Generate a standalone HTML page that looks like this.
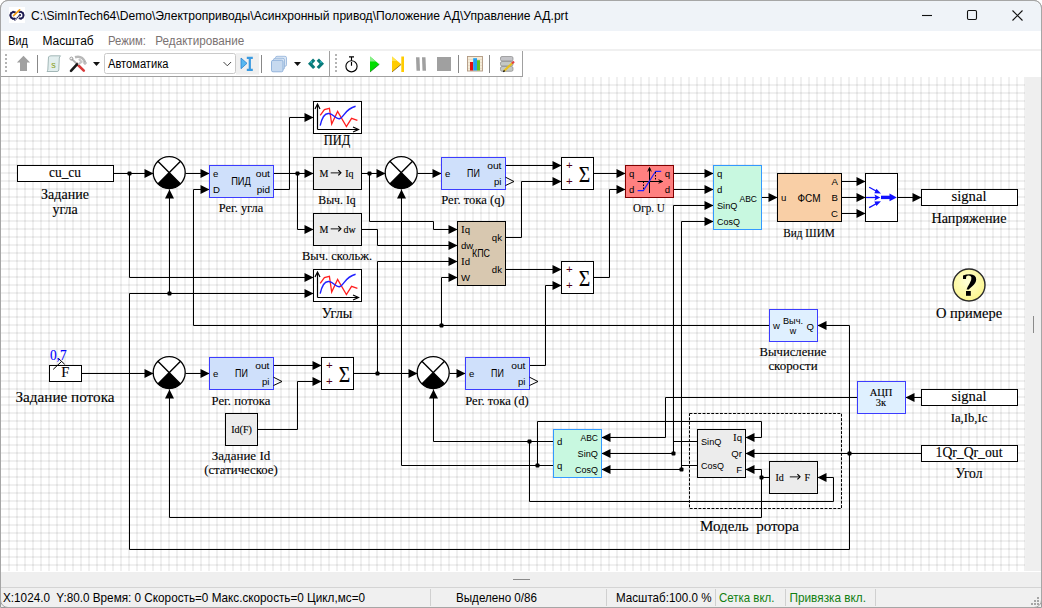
<!DOCTYPE html><html><head><meta charset="utf-8"><style>
*{margin:0;padding:0;box-sizing:border-box}
html,body{width:1042px;height:608px;overflow:hidden;background:#fff}
body{position:relative;font-family:"Liberation Sans",sans-serif}
.abs{position:absolute}
svg text{white-space:pre}
.w{fill:none;stroke:#000;stroke-width:1}
.ar{fill:#000}
.dt{fill:#000}
</style></head><body>

<div class="abs" style="left:0;top:0;width:1042px;height:608px;border:1px solid #9a9a9a;border-radius:8px 8px 0 0;overflow:hidden;background:#fff">
</div>
<!-- title -->
<div class="abs" style="left:1px;top:1px;width:1040px;height:30px;background:#eff3f8;border-radius:7px 7px 0 0"></div>

<!-- title icon -->
<svg class="abs" style="left:9px;top:7px" width="16" height="16" viewBox="0 0 16 16">
<rect width="16" height="16" fill="#fff"/>
<g stroke="#1c1a52" fill="none">
<path d="M6.6,5.6 A3.3,3.3 0 1 0 6.4,11.2" stroke-width="1.9"/>
<path d="M9.6,5.4 A3.3,3.3 0 1 1 9.8,11.2" stroke-width="1.9"/>
<path d="M0.8,8.2 h1.6 M1.6,5.2 l1.2,0.9 M1.6,11.2 l1.2,-0.9 M3.8,3.8 l0.3,1.3 M3.8,12.6 l0.3,-1.3 M15.2,8.2 h-1.6 M14.4,5.2 l-1.2,0.9 M14.4,11.2 l-1.2,-0.9 M12.2,3.8 l-0.3,1.3 M12.2,12.6 l-0.3,-1.3" stroke-width="1.3"/>
<path d="M5.4,13.4 L10.6,8.4" stroke-width="1.5" stroke-dasharray="1.1,0.7"/>
</g>
<circle cx="11" cy="8.1" r="1.1" fill="#1c1a52"/>
<path d="M4.6,8.7 L10.6,2.8" stroke="#f39c12" stroke-width="1.7" stroke-linecap="round"/>
</svg>
<!-- window controls -->
<svg class="abs" style="left:900px;top:0" width="142" height="31" viewBox="900 0 142 31">
<path d="M922,15.5 H932" stroke="#111" stroke-width="1.1"/>
<rect x="967.5" y="10.5" width="9" height="9" rx="1.2" stroke="#111" stroke-width="1.1" fill="none"/>
<path d="M1012.5,10.5 L1022.5,20.5 M1022.5,10.5 L1012.5,20.5" stroke="#111" stroke-width="1.1"/>
</svg>
<!-- toolbar -->
<svg class="abs" style="left:0;top:50px" width="1042" height="26" viewBox="0 50 1042 26">
<g fill="#b4b4b4">
<rect x="5" y="54" width="2" height="2"/><rect x="5" y="58" width="2" height="2"/><rect x="5" y="62" width="2" height="2"/><rect x="5" y="66" width="2" height="2"/><rect x="5" y="70" width="2" height="2"/>
<rect x="335" y="54" width="2" height="2"/><rect x="335" y="58" width="2" height="2"/><rect x="335" y="62" width="2" height="2"/><rect x="335" y="66" width="2" height="2"/><rect x="335" y="70" width="2" height="2"/>
</g>
<polygon points="23.5,55.8 30.1,62.6 27,62.6 27,71 20,71 20,62.6 16.9,62.6" fill="#a0a0a0"/>
<rect x="37" y="55" width="1" height="18" fill="#888"/>
<path d="M48.5,57 Q49,55.8 51,55.8 L60.5,55.8 Q59.5,57 59.3,58 L58.8,70 Q58.6,71.5 57,71.5 L47,71.5 Q47.5,70.5 47.8,70 Z" fill="#e2eeee" stroke="#9ab0b0" stroke-width="0.9"/>
<text x="53.5" y="68" font-family="Liberation Sans" font-size="9" fill="#8aa020" text-anchor="middle">s</text>
<path d="M77,64 L83.8,70.6" stroke="#d83838" stroke-width="2.6" stroke-linecap="round"/>
<path d="M71.6,58.8 L77,64" stroke="#b0b0b0" stroke-width="1.8"/>
<circle cx="71.4" cy="58.6" r="1.5" fill="none" stroke="#999" stroke-width="1"/>
<path d="M77.2,64.2 L71,70.8" stroke="#1a1a1a" stroke-width="2.6" stroke-linecap="round"/>
<path d="M75,57.2 Q82,55.2 85,62" stroke="#b8b8b8" stroke-width="2.6" fill="none"/>
<path d="M79,59 L81.5,61.8 L78.2,64.5" stroke="#c8c8c8" stroke-width="2.2" fill="none"/>
<circle cx="85" cy="63" r="1.2" fill="none" stroke="#999" stroke-width="0.9"/>
<polygon points="93,62 100,62 96.5,66" fill="#111"/>
<rect x="104.5" y="53.5" width="131" height="20" rx="2" fill="#fff" stroke="#c9c9c9"/>
<path d="M223.5,62 L227.3,65.8 L231.1,62" stroke="#444" stroke-width="1" fill="none"/>
<rect x="236" y="53" width="23" height="21.5" fill="#f0f0f0"/>
<polygon points="241,58 247,63.3 241,68.7" fill="#58b8f0" stroke="#2a80d0" stroke-width="0.8"/>
<path d="M246.8,57.8 h6 M249.8,57.8 v12 M246.8,69.8 h6" stroke="#3a9ae0" stroke-width="2.2"/>
<rect x="261" y="55" width="1" height="18" fill="#888"/>
<rect x="275.5" y="56.3" width="11" height="10" rx="1.5" fill="#dbe7f5" stroke="#9ab8dc" stroke-width="0.9"/>
<rect x="273.5" y="58.3" width="11" height="11" rx="1.5" fill="#d5e3f3" stroke="#9ab8dc" stroke-width="0.9"/>
<rect x="271.5" y="60.3" width="11.5" height="11.5" rx="1.5" fill="#c6d9ef" stroke="#8aaed8" stroke-width="0.9"/>
<polygon points="294,62 301,62 297.5,66" fill="#111"/>
<path d="M314.2,59.6 L310.2,63.8 L314.2,68" stroke="#0a7a7a" stroke-width="3.2" fill="none" stroke-linejoin="miter"/>
<path d="M317.8,59.6 L321.8,63.8 L317.8,68" stroke="#0a7a7a" stroke-width="3.2" fill="none" stroke-linejoin="miter"/>
<circle cx="311.2" cy="62" r="0.8" fill="#40e0f0"/><circle cx="321" cy="62" r="0.8" fill="#40e0f0"/>
<rect x="329" y="51" width="1" height="25" fill="#a0a0a0"/>
<circle cx="351.5" cy="66.3" r="5.6" fill="none" stroke="#000" stroke-width="1.15"/>
<path d="M349,56.9 h5 M351.5,56.9 v3.8 M351.5,62 v3.8" stroke="#000" stroke-width="1.15"/>
<polygon points="370,56.5 379.3,64.3 370,72" fill="#00dd00"/><path d="M370,72 L379.3,64.3" stroke="#207020" stroke-width="0.8"/>
<polygon points="370,56.5 376,61.5 370,61.5" fill="#88ee88"/>
<polygon points="392,56.5 401.3,64.3 392,72" fill="#ffcc00"/><path d="M392,72 L401.3,64.3" stroke="#806010" stroke-width="0.8"/>
<polygon points="392,56.5 397,61 392,61" fill="#ffe44d"/>
<rect x="401.3" y="56.5" width="2.7" height="15.5" fill="#ffcc00"/>
<polygon points="416,57.3 419.5,57.3 420,70.7 416.5,70.7" fill="#a0a0a0"/>
<polygon points="422,57.3 425.5,57.3 426,70.7 422.5,70.7" fill="#a0a0a0"/>
<rect x="437" y="57" width="14" height="14" fill="#a0a0a0"/>
<rect x="458" y="55" width="1" height="18" fill="#888"/>
<rect x="467.5" y="56.5" width="15" height="14.5" fill="#f5ecd8" stroke="#b09880" stroke-width="0.9"/>
<path d="M468,59.5h14 M468,62.5h14 M468,65.5h14 M468,68.5h14" stroke="#e0d4c0" stroke-width="0.6"/>
<rect x="470" y="62" width="3.2" height="8.5" fill="#e01010"/>
<rect x="473.2" y="58.2" width="3.8" height="12.3" fill="#20a0f0"/>
<rect x="477" y="60.2" width="3" height="10.3" fill="#60c020"/>
<rect x="489" y="55" width="1" height="18" fill="#888"/>
<rect x="500.5" y="56.5" width="12.5" height="4.5" rx="1.5" fill="#c4c4c8" stroke="#888" stroke-width="0.7"/>
<rect x="500.5" y="61.5" width="12.5" height="4.5" rx="1.5" fill="#c4c8c4" stroke="#888" stroke-width="0.7"/>
<rect x="500.5" y="66.5" width="12.5" height="4.8" rx="1.5" fill="#c4c8c4" stroke="#888" stroke-width="0.7"/>
<path d="M504,71 L512.5,63" stroke="#e8c020" stroke-width="2.2"/>
<path d="M512,63.5 L514,61.5" stroke="#e04040" stroke-width="2.2"/>
<path d="M503.3,71.8 L504.6,70.4" stroke="#111" stroke-width="1.4"/>
<rect x="522" y="51" width="1" height="25" fill="#a0a0a0"/>
</svg>
<!-- menu -->
<div class="abs" style="left:1px;top:49px;width:1040px;height:2px;background:#f0f0f0"></div>
<!-- canvas -->
<svg class="abs" style="left:0;top:0" width="1042" height="608" viewBox="0 0 1042 608">
<rect x="1" y="77" width="1025" height="495" fill="#fff"/>
<path d="M9,77V571M17,77V571M25,77V571M33,77V571M41,77V571M49,77V571M57,77V571M65,77V571M73,77V571M81,77V571M89,77V571M97,77V571M105,77V571M113,77V571M121,77V571M129,77V571M137,77V571M145,77V571M153,77V571M161,77V571M169,77V571M177,77V571M185,77V571M193,77V571M201,77V571M209,77V571M217,77V571M225,77V571M233,77V571M241,77V571M249,77V571M257,77V571M265,77V571M273,77V571M281,77V571M289,77V571M297,77V571M305,77V571M313,77V571M321,77V571M329,77V571M337,77V571M345,77V571M353,77V571M361,77V571M369,77V571M377,77V571M385,77V571M393,77V571M401,77V571M409,77V571M417,77V571M425,77V571M433,77V571M441,77V571M449,77V571M457,77V571M465,77V571M473,77V571M481,77V571M489,77V571M497,77V571M505,77V571M513,77V571M521,77V571M529,77V571M537,77V571M545,77V571M553,77V571M561,77V571M569,77V571M577,77V571M585,77V571M593,77V571M601,77V571M609,77V571M617,77V571M625,77V571M633,77V571M641,77V571M649,77V571M657,77V571M665,77V571M673,77V571M681,77V571M689,77V571M697,77V571M705,77V571M713,77V571M721,77V571M729,77V571M737,77V571M745,77V571M753,77V571M761,77V571M769,77V571M777,77V571M785,77V571M793,77V571M801,77V571M809,77V571M817,77V571M825,77V571M833,77V571M841,77V571M849,77V571M857,77V571M865,77V571M873,77V571M881,77V571M889,77V571M897,77V571M905,77V571M913,77V571M921,77V571M929,77V571M937,77V571M945,77V571M953,77V571M961,77V571M969,77V571M977,77V571M985,77V571M993,77V571M1001,77V571M1009,77V571M1017,77V571M1025,77V571" stroke="rgba(0,0,0,0.06)" stroke-width="2" fill="none" shape-rendering="crispEdges"/><path d="M1,85H1025M1,93H1025M1,101H1025M1,109H1025M1,117H1025M1,125H1025M1,133H1025M1,141H1025M1,149H1025M1,157H1025M1,165H1025M1,173H1025M1,181H1025M1,189H1025M1,197H1025M1,205H1025M1,213H1025M1,221H1025M1,229H1025M1,237H1025M1,245H1025M1,253H1025M1,261H1025M1,269H1025M1,277H1025M1,285H1025M1,293H1025M1,301H1025M1,309H1025M1,317H1025M1,325H1025M1,333H1025M1,341H1025M1,349H1025M1,357H1025M1,365H1025M1,373H1025M1,381H1025M1,389H1025M1,397H1025M1,405H1025M1,413H1025M1,421H1025M1,429H1025M1,437H1025M1,445H1025M1,453H1025M1,461H1025M1,469H1025M1,477H1025M1,485H1025M1,493H1025M1,501H1025M1,509H1025M1,517H1025M1,525H1025M1,533H1025M1,541H1025M1,549H1025M1,557H1025M1,565H1025" stroke="rgba(0,0,0,0.06)" stroke-width="2" fill="none" shape-rendering="crispEdges"/>
<rect x="0" y="76" width="523" height="1" fill="#a0a0a0"/>
<rect x="0" y="76" width="1" height="500" fill="#a0a0a0"/>
<rect x="17.5" y="165.5" width="96" height="16" fill="#fff" stroke="#000" stroke-width="1" /><text x="65" y="177" font-family='"Liberation Serif", serif' font-size="14.5" text-anchor="middle" fill="#000" stroke="#000" stroke-width="0.12" textLength="32" lengthAdjust="spacingAndGlyphs" >cu_cu</text><text x="65" y="199" font-family='"Liberation Serif", serif' font-size="14" text-anchor="middle" fill="#000" stroke="#000" stroke-width="0.12" >Задание</text><text x="65" y="214" font-family='"Liberation Serif", serif' font-size="14" text-anchor="middle" fill="#000" stroke="#000" stroke-width="0.12" >угла</text><path d="M113.5,173.5 L153.5,173.5" class="w"/><polygon points="153.5,173.5 144.5,169.0 144.5,178.0" class="ar"/><rect x="127.5" y="171.5" width="4" height="4" rx="1" class="dt"/><path d="M129.5,173.5 L129.5,277.5 L313.5,277.5" class="w"/><polygon points="313.5,277.5 304.5,273.0 304.5,282.0" class="ar"/><path d="M129.5,549.5 L129.5,293.5 L313.5,293.5" class="w"/><polygon points="313.5,293.5 304.5,289.0 304.5,298.0" class="ar"/><rect x="167.5" y="291.5" width="4" height="4" rx="1" class="dt"/><path d="M169.5,293.5 L169.5,189.5" class="w"/><polygon points="169.5,189.5 165.0,198.5 174.0,198.5" class="ar"/><path d="M185.5,173.5 L209.5,173.5" class="w"/><polygon points="209.5,173.5 200.5,169.0 200.5,178.0" class="ar"/><path d="M769.5,325.5 L193.5,325.5 L193.5,189.5 L209.5,189.5" class="w"/><polygon points="209.5,189.5 200.5,185.0 200.5,194.0" class="ar"/><path d="M273.5,173.5 L313.5,173.5" class="w"/><polygon points="313.5,173.5 304.5,169.0 304.5,178.0" class="ar"/><rect x="295.5" y="171.5" width="4" height="4" rx="1" class="dt"/><path d="M297.5,173.5 L297.5,229.5 L313.5,229.5" class="w"/><polygon points="313.5,229.5 304.5,225.0 304.5,234.0" class="ar"/><path d="M273.5,189.5 L289.5,189.5 L289.5,117.5 L313.5,117.5" class="w"/><polygon points="313.5,117.5 304.5,113.0 304.5,122.0" class="ar"/><path d="M361.5,173.5 L385.5,173.5" class="w"/><polygon points="385.5,173.5 376.5,169.0 376.5,178.0" class="ar"/><rect x="367.5" y="171.5" width="4" height="4" rx="1" class="dt"/><path d="M369.5,173.5 L369.5,221.5 L433.5,221.5 L433.5,229.5 L457.5,229.5" class="w"/><polygon points="457.5,229.5 448.5,225.0 448.5,234.0" class="ar"/><path d="M361.5,229.5 L377.5,229.5 L377.5,245.5 L457.5,245.5" class="w"/><polygon points="457.5,245.5 448.5,241.0 448.5,250.0" class="ar"/><path d="M377.5,373.5 L377.5,261.5 L457.5,261.5" class="w"/><polygon points="457.5,261.5 448.5,257.0 448.5,266.0" class="ar"/><path d="M441.5,325.5 L441.5,277.5 L457.5,277.5" class="w"/><polygon points="457.5,277.5 448.5,273.0 448.5,282.0" class="ar"/><rect x="439.5" y="323.5" width="4" height="4" rx="1" class="dt"/><path d="M553.5,465.5 L401.5,465.5 L401.5,189.5" class="w"/><polygon points="401.5,189.5 397.0,198.5 406.0,198.5" class="ar"/><rect x="535.5" y="463.5" width="4" height="4" rx="1" class="dt"/><path d="M537.5,465.5 L537.5,421.5 L761.5,421.5 L761.5,437.5 L745.5,437.5" class="w"/><polygon points="745.5,437.5 754.5,433.0 754.5,442.0" class="ar"/><path d="M417.5,173.5 L441.5,173.5" class="w"/><polygon points="441.5,173.5 432.5,169.0 432.5,178.0" class="ar"/><path d="M505.5,165.5 L561.5,165.5" class="w"/><polygon points="561.5,165.5 552.5,161.0 552.5,170.0" class="ar"/><path d="M505.5,237.5 L521.5,237.5 L521.5,181.5 L561.5,181.5" class="w"/><polygon points="561.5,181.5 552.5,177.0 552.5,186.0" class="ar"/><path d="M505.5,269.5 L561.5,269.5" class="w"/><polygon points="561.5,269.5 552.5,265.0 552.5,274.0" class="ar"/><path d="M529.5,365.5 L545.5,365.5 L545.5,285.5 L561.5,285.5" class="w"/><polygon points="561.5,285.5 552.5,281.0 552.5,290.0" class="ar"/><path d="M593.5,173.5 L625.5,173.5" class="w"/><polygon points="625.5,173.5 616.5,169.0 616.5,178.0" class="ar"/><path d="M593.5,277.5 L609.5,277.5 L609.5,189.5 L625.5,189.5" class="w"/><polygon points="625.5,189.5 616.5,185.0 616.5,194.0" class="ar"/><path d="M673.5,173.5 L713.5,173.5" class="w"/><polygon points="713.5,173.5 704.5,169.0 704.5,178.0" class="ar"/><path d="M673.5,189.5 L713.5,189.5" class="w"/><polygon points="713.5,189.5 704.5,185.0 704.5,194.0" class="ar"/><path d="M713.5,205.5 L673.5,205.5 L673.5,453.5 L601.5,453.5" class="w"/><polygon points="713.5,205.5 704.5,201.0 704.5,210.0" class="ar"/><polygon points="601.5,453.5 610.5,449.0 610.5,458.0" class="ar"/><rect x="671.5" y="451.5" width="4" height="4" rx="1" class="dt"/><path d="M673.5,441.5 L697.5,441.5" class="w"/><path d="M713.5,221.5 L681.5,221.5 L681.5,469.5 L601.5,469.5" class="w"/><polygon points="713.5,221.5 704.5,217.0 704.5,226.0" class="ar"/><polygon points="601.5,469.5 610.5,465.0 610.5,474.0" class="ar"/><rect x="679.5" y="467.5" width="4" height="4" rx="1" class="dt"/><path d="M681.5,465.5 L697.5,465.5" class="w"/><path d="M857.5,397.5 L665.5,397.5 L665.5,437.5 L601.5,437.5" class="w"/><polygon points="601.5,437.5 610.5,433.0 610.5,442.0" class="ar"/><path d="M921.5,397.5 L905.5,397.5" class="w"/><polygon points="905.5,397.5 914.5,393.0 914.5,402.0" class="ar"/><path d="M761.5,197.5 L777.5,197.5" class="w"/><polygon points="777.5,197.5 768.5,193.0 768.5,202.0" class="ar"/><path d="M841.5,181.5 L865.5,181.5" class="w"/><polygon points="865.5,181.5 856.5,177.0 856.5,186.0" class="ar"/><path d="M841.5,197.5 L865.5,197.5" class="w"/><polygon points="865.5,197.5 856.5,193.0 856.5,202.0" class="ar"/><path d="M841.5,213.5 L865.5,213.5" class="w"/><polygon points="865.5,213.5 856.5,209.0 856.5,218.0" class="ar"/><path d="M897.5,197.5 L921.5,197.5" class="w"/><polygon points="921.5,197.5 912.5,193.0 912.5,202.0" class="ar"/><path d="M849.5,325.5 L817.5,325.5" class="w"/><polygon points="817.5,325.5 826.5,321.0 826.5,330.0" class="ar"/><path d="M849.5,325.5 L849.5,549.5 L129.5,549.5" class="w"/><path d="M921.5,453.5 L745.5,453.5" class="w"/><polygon points="745.5,453.5 754.5,449.0 754.5,458.0" class="ar"/><rect x="847.5" y="451.5" width="4" height="4" rx="1" class="dt"/><path d="M185.5,373.5 L209.5,373.5" class="w"/><polygon points="209.5,373.5 200.5,369.0 200.5,378.0" class="ar"/><path d="M81.5,373.5 L153.5,373.5" class="w"/><polygon points="153.5,373.5 144.5,369.0 144.5,378.0" class="ar"/><path d="M169.5,517.5 L169.5,389.5" class="w"/><polygon points="169.5,389.5 165.0,398.5 174.0,398.5" class="ar"/><path d="M169.5,517.5 L761.5,517.5 L761.5,469.5 L745.5,469.5" class="w"/><polygon points="745.5,469.5 754.5,465.0 754.5,474.0" class="ar"/><rect x="759.5" y="475.5" width="4" height="4" rx="1" class="dt"/><path d="M761.5,477.5 L769.5,477.5" class="w"/><path d="M553.5,441.5 L433.5,441.5 L433.5,389.5" class="w"/><polygon points="433.5,389.5 429.0,398.5 438.0,398.5" class="ar"/><rect x="527.5" y="439.5" width="4" height="4" rx="1" class="dt"/><path d="M529.5,441.5 L529.5,501.5 L833.5,501.5 L833.5,477.5 L817.5,477.5" class="w"/><polygon points="817.5,477.5 826.5,473.0 826.5,482.0" class="ar"/><path d="M273.5,365.5 L321.5,365.5" class="w"/><polygon points="321.5,365.5 312.5,361.0 312.5,370.0" class="ar"/><path d="M257.5,429.5 L297.5,429.5 L297.5,381.5 L321.5,381.5" class="w"/><polygon points="321.5,381.5 312.5,377.0 312.5,386.0" class="ar"/><path d="M353.5,373.5 L417.5,373.5" class="w"/><polygon points="417.5,373.5 408.5,369.0 408.5,378.0" class="ar"/><rect x="375.5" y="371.5" width="4" height="4" rx="1" class="dt"/><path d="M449.5,373.5 L465.5,373.5" class="w"/><polygon points="465.5,373.5 456.5,369.0 456.5,378.0" class="ar"/><circle cx="169.2" cy="172.6" r="16" fill="#fff" stroke="#000" stroke-width="1.3"/><path d="M169.2,172.6 L157.88629150101522,183.91370849898476 A16,16 0 0 0 180.51370849898476,183.91370849898476 Z" fill="#000"/><path d="M157.88629150101522,161.28629150101523 L180.51370849898476,183.91370849898476 M180.51370849898476,161.28629150101523 L157.88629150101522,183.91370849898476" stroke="#000" stroke-width="1.4" fill="none"/><rect x="209.5" y="165.5" width="64" height="32" fill="#cfe0fb" stroke="#3c3cff" stroke-width="1" /><text x="213" y="177" font-family='"Liberation Sans", sans-serif' font-size="9.6" text-anchor="start" fill="#000" stroke="#000" stroke-width="0" >e</text><text x="213" y="193" font-family='"Liberation Sans", sans-serif' font-size="9.6" text-anchor="start" fill="#000" stroke="#000" stroke-width="0" >D</text><text x="270" y="177" font-family='"Liberation Sans", sans-serif' font-size="9.6" text-anchor="end" fill="#000" stroke="#000" stroke-width="0" textLength="14.3" lengthAdjust="spacingAndGlyphs" >out</text><text x="270" y="193" font-family='"Liberation Sans", sans-serif' font-size="9.6" text-anchor="end" fill="#000" stroke="#000" stroke-width="0" textLength="13.3" lengthAdjust="spacingAndGlyphs" >pid</text><text x="241" y="185" font-family='"Liberation Sans", sans-serif' font-size="10.5" text-anchor="middle" fill="#000" stroke="#000" stroke-width="0" textLength="19.7" lengthAdjust="spacingAndGlyphs" >ПИД</text><text x="241" y="212" font-family='"Liberation Serif", serif' font-size="12.4" text-anchor="middle" fill="#000" stroke="#000" stroke-width="0.12" >Рег. угла</text><rect x="313.5" y="101.5" width="48" height="32" fill="#fff" stroke="#000" stroke-width="1" /><path d="M317.5,129.5 L317.5,105 M317.5,129.5 L358,129.5" stroke="#000" stroke-width="1.2" fill="none"/><path d="M315.0,109 L317.5,104 L320.0,109 M353,127.0 L358.5,129.5 L353,132.0" stroke="#000" stroke-width="1.2" fill="none"/><polyline points="320.2,115.3 324.4,109.5 329.4,108.4 331.7,124.1 337.6,111.5 346.4,126.6 351.6,118.3 357.4,120.3" stroke="#ff2020" stroke-width="1.3" fill="none"/><path d="M320.2,125.7 C322,117 325,113 329,113.5 C334,114 336,120 340,118.5 C344,117 345,109 355.6,106.3" stroke="#2020ff" stroke-width="1.4" fill="none"/><text x="337" y="145.3" font-family='"Liberation Serif", serif' font-size="13.6" text-anchor="middle" fill="#000" stroke="#000" stroke-width="0.12" textLength="26.5" lengthAdjust="spacingAndGlyphs" >ПИД</text><rect x="313.5" y="157.5" width="48" height="32" fill="#ececec" stroke="#000" stroke-width="1" /><text x="319.5" y="176.7" font-family='"Liberation Serif", serif' font-size="10" text-anchor="start" fill="#000" stroke="#000" stroke-width="0.12" >M</text><text x="353.5" y="176.7" font-family='"Liberation Serif", serif' font-size="10" text-anchor="end" fill="#000" stroke="#000" stroke-width="0.12" >Iq</text><path d="M330.7,172.8 L340.3,172.8" stroke="#666" stroke-width="1.6"/><path d="M338.3,170.2 L340.9,172.8 L338.3,175.4" stroke="#000" stroke-width="1.2" fill="none"/><text x="337" y="204" font-family='"Liberation Serif", serif' font-size="11.8" text-anchor="middle" fill="#000" stroke="#000" stroke-width="0.12" >Выч. Iq</text><rect x="313.5" y="213.5" width="48" height="32" fill="#ececec" stroke="#000" stroke-width="1" /><text x="319.5" y="232.7" font-family='"Liberation Serif", serif' font-size="10" text-anchor="start" fill="#000" stroke="#000" stroke-width="0.12" >M</text><text x="355.8" y="232.7" font-family='"Liberation Serif", serif' font-size="10" text-anchor="end" fill="#000" stroke="#000" stroke-width="0.12" >dw</text><path d="M330.7,228.8 L340.3,228.8" stroke="#666" stroke-width="1.6"/><path d="M338.3,226.2 L340.9,228.8 L338.3,231.4" stroke="#000" stroke-width="1.2" fill="none"/><text x="337" y="260" font-family='"Liberation Serif", serif' font-size="12.5" text-anchor="middle" fill="#000" stroke="#000" stroke-width="0.12" >Выч. скольж.</text><rect x="313.5" y="269.5" width="48" height="32" fill="#fff" stroke="#000" stroke-width="1" /><path d="M317.5,297.5 L317.5,273 M317.5,297.5 L358,297.5" stroke="#000" stroke-width="1.2" fill="none"/><path d="M315.0,277 L317.5,272 L320.0,277 M353,295.0 L358.5,297.5 L353,300.0" stroke="#000" stroke-width="1.2" fill="none"/><polyline points="320.2,283.3 324.4,277.5 329.4,276.4 331.7,292.1 337.6,279.5 346.4,294.6 351.6,286.3 357.4,288.3" stroke="#ff2020" stroke-width="1.3" fill="none"/><path d="M320.2,293.7 C322,285 325,281 329,281.5 C334,282 336,288 340,286.5 C344,285 345,277 355.6,274.3" stroke="#2020ff" stroke-width="1.4" fill="none"/><text x="337" y="318" font-family='"Liberation Serif", serif' font-size="14.1" text-anchor="middle" fill="#000" stroke="#000" stroke-width="0.12" >Углы</text><circle cx="401.2" cy="172.6" r="16" fill="#fff" stroke="#000" stroke-width="1.3"/><path d="M401.2,172.6 L389.88629150101525,183.91370849898476 A16,16 0 0 0 412.5137084989847,183.91370849898476 Z" fill="#000"/><path d="M389.88629150101525,161.28629150101523 L412.5137084989847,183.91370849898476 M412.5137084989847,161.28629150101523 L389.88629150101525,183.91370849898476" stroke="#000" stroke-width="1.4" fill="none"/><rect x="441.5" y="157.5" width="64" height="32" fill="#cfe0fb" stroke="#3c3cff" stroke-width="1" /><text x="445" y="177" font-family='"Liberation Sans", sans-serif' font-size="9.6" text-anchor="start" fill="#000" stroke="#000" stroke-width="0" >e</text><text x="501.5" y="168.5" font-family='"Liberation Sans", sans-serif' font-size="9.6" text-anchor="end" fill="#000" stroke="#000" stroke-width="0" textLength="14.3" lengthAdjust="spacingAndGlyphs" >out</text><text x="501.5" y="185" font-family='"Liberation Sans", sans-serif' font-size="9.6" text-anchor="end" fill="#000" stroke="#000" stroke-width="0" >pi</text><text x="473.5" y="177" font-family='"Liberation Sans", sans-serif' font-size="10.5" text-anchor="middle" fill="#000" stroke="#000" stroke-width="0" textLength="12.8" lengthAdjust="spacingAndGlyphs" >ПИ</text><path d="M505.5,177.2 L514,181.5 L505.5,185.5" stroke="#000" stroke-width="1" fill="none"/><text x="473" y="204" font-family='"Liberation Serif", serif' font-size="12.6" text-anchor="middle" fill="#000" stroke="#000" stroke-width="0.12" >Рег. тока (q)</text><rect x="457.5" y="221.5" width="48" height="64" fill="#d8c8b0" stroke="#000" stroke-width="1" /><text x="461" y="233" font-family='"Liberation Sans", sans-serif' font-size="9.6" text-anchor="start" fill="#000" stroke="#000" stroke-width="0" ><tspan font-family="Liberation Serif, serif" font-size="11">I</tspan>q</text><text x="461" y="249" font-family='"Liberation Sans", sans-serif' font-size="9.6" text-anchor="start" fill="#000" stroke="#000" stroke-width="0" >dw</text><text x="461" y="265" font-family='"Liberation Sans", sans-serif' font-size="9.6" text-anchor="start" fill="#000" stroke="#000" stroke-width="0" ><tspan font-family="Liberation Serif, serif" font-size="11">I</tspan>d</text><text x="461" y="281" font-family='"Liberation Sans", sans-serif' font-size="9.6" text-anchor="start" fill="#000" stroke="#000" stroke-width="0" >W</text><text x="502" y="241" font-family='"Liberation Sans", sans-serif' font-size="9.6" text-anchor="end" fill="#000" stroke="#000" stroke-width="0" >qk</text><text x="502" y="273" font-family='"Liberation Sans", sans-serif' font-size="9.6" text-anchor="end" fill="#000" stroke="#000" stroke-width="0" >dk</text><text x="481" y="257" font-family='"Liberation Sans", sans-serif' font-size="10.5" text-anchor="middle" fill="#000" stroke="#000" stroke-width="0" textLength="18" lengthAdjust="spacingAndGlyphs" >КПС</text><rect x="561.5" y="157.5" width="32" height="32" fill="#fff" stroke="#000" stroke-width="1" /><text x="569.3" y="169.3" font-family='"Liberation Sans", sans-serif' font-size="11.5" text-anchor="middle" fill="#500010" stroke="#500010" stroke-width="0" >+</text><text x="569.3" y="185.3" font-family='"Liberation Sans", sans-serif' font-size="11.5" text-anchor="middle" fill="#500010" stroke="#500010" stroke-width="0" >+</text><text x="584.5" y="182" font-family='"Liberation Serif", serif' font-size="23.5" text-anchor="middle" fill="#000" stroke="#000" stroke-width="0.12" textLength="11.5" lengthAdjust="spacingAndGlyphs" >Σ</text><rect x="561.5" y="261.5" width="32" height="32" fill="#fff" stroke="#000" stroke-width="1" /><text x="569.3" y="273.3" font-family='"Liberation Sans", sans-serif' font-size="11.5" text-anchor="middle" fill="#500010" stroke="#500010" stroke-width="0" >+</text><text x="569.3" y="289.3" font-family='"Liberation Sans", sans-serif' font-size="11.5" text-anchor="middle" fill="#500010" stroke="#500010" stroke-width="0" >+</text><text x="584.5" y="286" font-family='"Liberation Serif", serif' font-size="23.5" text-anchor="middle" fill="#000" stroke="#000" stroke-width="0.12" textLength="11.5" lengthAdjust="spacingAndGlyphs" >Σ</text><rect x="625.5" y="165.5" width="48" height="32" fill="#ff8080" stroke="#800000" stroke-width="1" /><text x="629" y="177" font-family='"Liberation Sans", sans-serif' font-size="9.6" text-anchor="start" fill="#000" stroke="#000" stroke-width="0" >q</text><text x="629" y="193" font-family='"Liberation Sans", sans-serif' font-size="9.6" text-anchor="start" fill="#000" stroke="#000" stroke-width="0" >d</text><text x="670" y="177" font-family='"Liberation Sans", sans-serif' font-size="9.6" text-anchor="end" fill="#000" stroke="#000" stroke-width="0" >q</text><text x="670" y="193" font-family='"Liberation Sans", sans-serif' font-size="9.6" text-anchor="end" fill="#000" stroke="#000" stroke-width="0" >d</text><path d="M649.5,168 L649.5,193 M637.5,181.5 L662.5,181.5" stroke="#000" stroke-width="1" fill="none"/><path d="M647.8,171.5 L649.5,167.5 L651.2,171.5 M658.5,179.8 L662.5,181.5 L658.5,183.2" stroke="#000" stroke-width="1" fill="none"/><path d="M637.6,190.6 L643.3,190.6 L655.7,171.3 L661.2,171.3" stroke="#2020ff" stroke-width="1.2" fill="none"/><path d="M643.5,181.5 L643.5,190 M655.5,172 L655.5,181.5" stroke="#000" stroke-width="1" stroke-dasharray="1.5,1.5" fill="none"/><text x="649" y="211.5" font-family='"Liberation Serif", serif' font-size="11.5" text-anchor="middle" fill="#000" stroke="#000" stroke-width="0.12" textLength="31.8" lengthAdjust="spacingAndGlyphs" >Огр. U</text><rect x="713.5" y="165.5" width="48" height="64" fill="#c8f8e0" stroke="#3399ff" stroke-width="1" /><text x="717" y="177" font-family='"Liberation Sans", sans-serif' font-size="9.6" text-anchor="start" fill="#000" stroke="#000" stroke-width="0" >q</text><text x="717" y="193" font-family='"Liberation Sans", sans-serif' font-size="9.6" text-anchor="start" fill="#000" stroke="#000" stroke-width="0" >d</text><text x="717" y="209" font-family='"Liberation Sans", sans-serif' font-size="9.6" text-anchor="start" fill="#000" stroke="#000" stroke-width="0" textLength="20.4" lengthAdjust="spacingAndGlyphs" >SinQ</text><text x="717" y="225" font-family='"Liberation Sans", sans-serif' font-size="9.6" text-anchor="start" fill="#000" stroke="#000" stroke-width="0" textLength="22.9" lengthAdjust="spacingAndGlyphs" >CosQ</text><text x="757" y="202" font-family='"Liberation Sans", sans-serif' font-size="9.6" text-anchor="end" fill="#000" stroke="#000" stroke-width="0" textLength="17.5" lengthAdjust="spacingAndGlyphs" >ABC</text><rect x="777.5" y="173.5" width="64" height="48" fill="#f9cfa6" stroke="#000" stroke-width="1" /><text x="781" y="201" font-family='"Liberation Sans", sans-serif' font-size="9.6" text-anchor="start" fill="#000" stroke="#000" stroke-width="0" >u</text><text x="809" y="202" font-family='"Liberation Sans", sans-serif' font-size="10" text-anchor="middle" fill="#000" stroke="#000" stroke-width="0" >ФСМ</text><text x="838" y="185" font-family='"Liberation Sans", sans-serif' font-size="9.6" text-anchor="end" fill="#000" stroke="#000" stroke-width="0" >A</text><text x="838" y="201" font-family='"Liberation Sans", sans-serif' font-size="9.6" text-anchor="end" fill="#000" stroke="#000" stroke-width="0" >B</text><text x="838" y="217" font-family='"Liberation Sans", sans-serif' font-size="9.6" text-anchor="end" fill="#000" stroke="#000" stroke-width="0" >C</text><text x="809" y="236.5" font-family='"Liberation Serif", serif' font-size="12.5" text-anchor="middle" fill="#000" stroke="#000" stroke-width="0.12" textLength="51.6" lengthAdjust="spacingAndGlyphs" >Вид ШИМ</text><rect x="865.5" y="173.5" width="32" height="48" fill="#fff" stroke="#000" stroke-width="1" /><g fill="#1010ff" stroke="none"><path d="M869.2,187.2 L877,191.5" stroke="#1010ff" stroke-width="1.3"/><polygon points="881,193.6 876.4,188.8 874.4,193.2"/><path d="M866,197.5 L877,197.5" stroke="#1010ff" stroke-width="1.3"/><polygon points="880.3,197.5 874.4,194.6 875.6,197.5 874.4,200.4"/><path d="M869.2,207.6 L877,203.2" stroke="#1010ff" stroke-width="1.3"/><polygon points="881,201.2 874.4,201.6 876.4,206"/><rect x="881" y="195.7" width="9" height="3.4"/><polygon points="896.8,197.4 889.5,193.6 889.5,201.2"/></g><rect x="921.5" y="189.5" width="96" height="16" fill="#fff" stroke="#000" stroke-width="1" /><text x="969" y="201" font-family='"Liberation Serif", serif' font-size="14.7" text-anchor="middle" fill="#000" stroke="#000" stroke-width="0.12" >signal</text><text x="969" y="223" font-family='"Liberation Serif", serif' font-size="14.2" text-anchor="middle" fill="#000" stroke="#000" stroke-width="0.12" >Напряжение</text><defs><radialGradient id="yg" cx="0.45" cy="0.4" r="0.6"><stop offset="0" stop-color="#ffffd8"/><stop offset="1" stop-color="#fcf68e"/></radialGradient></defs><circle cx="969" cy="285" r="16" fill="url(#yg)" stroke="#2a2a2a" stroke-width="1.4"/><path d="M963,279 L963,275.6 Q966,274.2 970,274.2 Q976.2,274.4 976.2,279.5 Q976.2,283 972,286.5 Q969.5,288.6 968.8,289.6 L966.6,289.6 Q967.6,286.6 969.6,283.5 Q971.8,280 971.4,277.6 Q971,275.6 968.6,275.6 Q967.2,275.6 966.2,276.6 L966,279 Z" fill="#000"/><rect x="966" y="291" width="4.8" height="4.8" fill="#000"/><text x="969" y="318" font-family='"Liberation Serif", serif' font-size="14.5" text-anchor="middle" fill="#000" stroke="#000" stroke-width="0.12" >О примере</text><rect x="769.5" y="309.5" width="48" height="32" fill="#dff0ff" stroke="#3c3cff" stroke-width="1" /><text x="773" y="329" font-family='"Liberation Sans", sans-serif' font-size="9.6" text-anchor="start" fill="#000" stroke="#000" stroke-width="0" >w</text><text x="814" y="330" font-family='"Liberation Sans", sans-serif' font-size="9.6" text-anchor="end" fill="#000" stroke="#000" stroke-width="0" >Q</text><text x="793" y="324" font-family='"Liberation Sans", sans-serif' font-size="9.5" text-anchor="middle" fill="#000" stroke="#000" stroke-width="0" textLength="20" lengthAdjust="spacingAndGlyphs" >Выч.</text><text x="793" y="334" font-family='"Liberation Sans", sans-serif' font-size="9" text-anchor="middle" fill="#000" stroke="#000" stroke-width="0" >w</text><text x="793" y="356" font-family='"Liberation Serif", serif' font-size="12.7" text-anchor="middle" fill="#000" stroke="#000" stroke-width="0.12" >Вычисление</text><text x="793" y="370" font-family='"Liberation Serif", serif' font-size="12.9" text-anchor="middle" fill="#000" stroke="#000" stroke-width="0.12" >скорости</text><rect x="49.5" y="365.5" width="32" height="16" fill="#fff" stroke="#000" stroke-width="1" /><text x="65.3" y="377" font-family='"Liberation Serif", serif' font-size="14.5" text-anchor="middle" fill="#000" stroke="#000" stroke-width="0.12" >F</text><path d="M53.2,369.4 L61.5,361.5 M58.5,358.5 L64.7,364.3" stroke="#000" stroke-width="1" fill="none"/><text x="58.3" y="359.7" font-family='"Liberation Serif", serif' font-size="14" text-anchor="middle" fill="#0000ff" stroke="#0000ff" stroke-width="0.12" textLength="16.8" lengthAdjust="spacingAndGlyphs" >0,7</text><text x="65" y="402" font-family='"Liberation Serif", serif' font-size="15.2" text-anchor="middle" fill="#000" stroke="#000" stroke-width="0.12" >Задание потока</text><circle cx="169.2" cy="372.6" r="16" fill="#fff" stroke="#000" stroke-width="1.3"/><path d="M169.2,372.6 L157.88629150101522,383.91370849898476 A16,16 0 0 0 180.51370849898476,383.91370849898476 Z" fill="#000"/><path d="M157.88629150101522,361.2862915010153 L180.51370849898476,383.91370849898476 M180.51370849898476,361.2862915010153 L157.88629150101522,383.91370849898476" stroke="#000" stroke-width="1.4" fill="none"/><rect x="209.5" y="357.5" width="64" height="32" fill="#cfe0fb" stroke="#3c3cff" stroke-width="1" /><text x="213" y="377" font-family='"Liberation Sans", sans-serif' font-size="9.6" text-anchor="start" fill="#000" stroke="#000" stroke-width="0" >e</text><text x="269.5" y="368.5" font-family='"Liberation Sans", sans-serif' font-size="9.6" text-anchor="end" fill="#000" stroke="#000" stroke-width="0" textLength="14.3" lengthAdjust="spacingAndGlyphs" >out</text><text x="269.5" y="385" font-family='"Liberation Sans", sans-serif' font-size="9.6" text-anchor="end" fill="#000" stroke="#000" stroke-width="0" >pi</text><text x="241.5" y="377" font-family='"Liberation Sans", sans-serif' font-size="10.5" text-anchor="middle" fill="#000" stroke="#000" stroke-width="0" textLength="12.8" lengthAdjust="spacingAndGlyphs" >ПИ</text><path d="M273.5,377.2 L282,381.5 L273.5,385.5" stroke="#000" stroke-width="1" fill="none"/><text x="241" y="405" font-family='"Liberation Serif", serif' font-size="12.7" text-anchor="middle" fill="#000" stroke="#000" stroke-width="0.12" >Рег. потока</text><rect x="321.5" y="357.5" width="32" height="32" fill="#fff" stroke="#000" stroke-width="1" /><text x="329.3" y="369.3" font-family='"Liberation Sans", sans-serif' font-size="11.5" text-anchor="middle" fill="#500010" stroke="#500010" stroke-width="0" >+</text><text x="329.3" y="385.3" font-family='"Liberation Sans", sans-serif' font-size="11.5" text-anchor="middle" fill="#500010" stroke="#500010" stroke-width="0" >+</text><text x="344.5" y="382" font-family='"Liberation Serif", serif' font-size="23.5" text-anchor="middle" fill="#000" stroke="#000" stroke-width="0.12" textLength="11.5" lengthAdjust="spacingAndGlyphs" >Σ</text><rect x="225.5" y="413.5" width="32" height="32" fill="#ececec" stroke="#000" stroke-width="1" /><text x="241.5" y="433.0" font-family='"Liberation Serif", serif' font-size="10" text-anchor="middle" fill="#000" stroke="#000" stroke-width="0.12" >Id(F)</text><text x="241" y="460" font-family='"Liberation Serif", serif' font-size="13" text-anchor="middle" fill="#000" stroke="#000" stroke-width="0.12" >Задание Id</text><text x="241" y="474" font-family='"Liberation Serif", serif' font-size="12.8" text-anchor="middle" fill="#000" stroke="#000" stroke-width="0.12" >(статическое)</text><circle cx="433.2" cy="372.6" r="16" fill="#fff" stroke="#000" stroke-width="1.3"/><path d="M433.2,372.6 L421.88629150101525,383.91370849898476 A16,16 0 0 0 444.5137084989847,383.91370849898476 Z" fill="#000"/><path d="M421.88629150101525,361.2862915010153 L444.5137084989847,383.91370849898476 M444.5137084989847,361.2862915010153 L421.88629150101525,383.91370849898476" stroke="#000" stroke-width="1.4" fill="none"/><rect x="465.5" y="357.5" width="64" height="32" fill="#cfe0fb" stroke="#3c3cff" stroke-width="1" /><text x="469" y="377" font-family='"Liberation Sans", sans-serif' font-size="9.6" text-anchor="start" fill="#000" stroke="#000" stroke-width="0" >e</text><text x="525.5" y="368.5" font-family='"Liberation Sans", sans-serif' font-size="9.6" text-anchor="end" fill="#000" stroke="#000" stroke-width="0" textLength="14.3" lengthAdjust="spacingAndGlyphs" >out</text><text x="525.5" y="385" font-family='"Liberation Sans", sans-serif' font-size="9.6" text-anchor="end" fill="#000" stroke="#000" stroke-width="0" >pi</text><text x="497.5" y="377" font-family='"Liberation Sans", sans-serif' font-size="10.5" text-anchor="middle" fill="#000" stroke="#000" stroke-width="0" textLength="12.8" lengthAdjust="spacingAndGlyphs" >ПИ</text><path d="M529.5,377.2 L538,381.5 L529.5,385.5" stroke="#000" stroke-width="1" fill="none"/><text x="497" y="405" font-family='"Liberation Serif", serif' font-size="12.6" text-anchor="middle" fill="#000" stroke="#000" stroke-width="0.12" >Рег. тока (d)</text><rect x="857.5" y="381.5" width="48" height="32" fill="#dff0ff" stroke="#3c3cff" stroke-width="1" /><text x="881" y="396" font-family='"Liberation Serif", serif' font-size="10.5" text-anchor="middle" fill="#000" stroke="#000" stroke-width="0.12" >АЦП</text><text x="881" y="405.7" font-family='"Liberation Serif", serif' font-size="10.5" text-anchor="middle" fill="#000" stroke="#000" stroke-width="0.12" >3к</text><rect x="921.5" y="389.5" width="96" height="16" fill="#fff" stroke="#000" stroke-width="1" /><text x="969" y="401" font-family='"Liberation Serif", serif' font-size="14.7" text-anchor="middle" fill="#000" stroke="#000" stroke-width="0.12" >signal</text><text x="969" y="422" font-family='"Liberation Serif", serif' font-size="12.7" text-anchor="middle" fill="#000" stroke="#000" stroke-width="0.12" >Ia,Ib,Ic</text><rect x="553.5" y="429.5" width="48" height="48" fill="#c8f8e0" stroke="#3399ff" stroke-width="1" /><text x="557" y="445" font-family='"Liberation Sans", sans-serif' font-size="9.6" text-anchor="start" fill="#000" stroke="#000" stroke-width="0" >d</text><text x="557" y="469" font-family='"Liberation Sans", sans-serif' font-size="9.6" text-anchor="start" fill="#000" stroke="#000" stroke-width="0" >q</text><text x="598" y="441" font-family='"Liberation Sans", sans-serif' font-size="9.6" text-anchor="end" fill="#000" stroke="#000" stroke-width="0" textLength="17.5" lengthAdjust="spacingAndGlyphs" >ABC</text><text x="598" y="457" font-family='"Liberation Sans", sans-serif' font-size="9.6" text-anchor="end" fill="#000" stroke="#000" stroke-width="0" textLength="20.4" lengthAdjust="spacingAndGlyphs" >SinQ</text><text x="598" y="473" font-family='"Liberation Sans", sans-serif' font-size="9.6" text-anchor="end" fill="#000" stroke="#000" stroke-width="0" textLength="22.9" lengthAdjust="spacingAndGlyphs" >CosQ</text><rect x="689.5" y="413.5" width="152" height="95" fill="none" stroke="#000" stroke-width="1" stroke-dasharray="2.9,1.45"/><rect x="697.5" y="429.5" width="48" height="48" fill="#ececec" stroke="#000" stroke-width="1" /><text x="701" y="445" font-family='"Liberation Sans", sans-serif' font-size="9.6" text-anchor="start" fill="#000" stroke="#000" stroke-width="0" textLength="20.4" lengthAdjust="spacingAndGlyphs" >SinQ</text><text x="701" y="469" font-family='"Liberation Sans", sans-serif' font-size="9.6" text-anchor="start" fill="#000" stroke="#000" stroke-width="0" textLength="22.9" lengthAdjust="spacingAndGlyphs" >CosQ</text><text x="742" y="441" font-family='"Liberation Sans", sans-serif' font-size="9.6" text-anchor="end" fill="#000" stroke="#000" stroke-width="0" ><tspan font-family="Liberation Serif, serif" font-size="11">I</tspan>q</text><text x="742" y="457" font-family='"Liberation Sans", sans-serif' font-size="9.6" text-anchor="end" fill="#000" stroke="#000" stroke-width="0" >Qr</text><text x="742" y="473" font-family='"Liberation Sans", sans-serif' font-size="9.6" text-anchor="end" fill="#000" stroke="#000" stroke-width="0" >F</text><rect x="769.5" y="461.5" width="48" height="32" fill="#ececec" stroke="#000" stroke-width="1" /><text x="775.5" y="480.7" font-family='"Liberation Serif", serif' font-size="10" text-anchor="start" fill="#000" stroke="#000" stroke-width="0.12" >Id</text><text x="810" y="480.7" font-family='"Liberation Serif", serif' font-size="10" text-anchor="end" fill="#000" stroke="#000" stroke-width="0.12" >F</text><path d="M789.8,476.8 L799.4,476.8" stroke="#666" stroke-width="1.6"/><path d="M797.4,474.2 L800.0,476.8 L797.4,479.4" stroke="#000" stroke-width="1.2" fill="none"/><text x="700" y="531" font-family='"Liberation Serif", serif' font-size="15" text-anchor="start" fill="#000" stroke="#000" stroke-width="0.12" >Модель  ротора</text><rect x="921.5" y="445.5" width="96" height="16" fill="#fff" stroke="#000" stroke-width="1" /><text x="969" y="457" font-family='"Liberation Serif", serif' font-size="13.7" text-anchor="middle" fill="#000" stroke="#000" stroke-width="0.12" >1Qr_Qr_out</text><text x="969" y="478" font-family='"Liberation Serif", serif' font-size="13.6" text-anchor="middle" fill="#000" stroke="#000" stroke-width="0.12" >Угол</text>
</svg>
<!-- scrollbars -->
<div class="abs" style="left:1026px;top:77px;width:15px;height:494px;background:#efefef"></div>
<div class="abs" style="left:1033px;top:316px;width:1px;height:17px;background:#8a8a8a"></div>
<div class="abs" style="left:1px;top:572px;width:1040px;height:15px;background:#efefef"></div>
<div class="abs" style="left:513px;top:579px;width:17px;height:1px;background:#8a8a8a"></div>
<!-- status -->
<div class="abs" style="left:1px;top:587px;width:1040px;height:1px;background:#d4d4d4"></div>
<div class="abs" style="left:1px;top:588px;width:1040px;height:19px;background:#f0f0f0"></div>
<div class="abs" style="left:430px;top:589px;width:1px;height:17px;background:#d0d0d0"></div>
<div class="abs" style="left:606px;top:589px;width:1px;height:17px;background:#d0d0d0"></div>
<div class="abs" style="left:715px;top:589px;width:1px;height:17px;background:#d0d0d0"></div>
<div class="abs" style="left:785px;top:589px;width:1px;height:17px;background:#d0d0d0"></div>
<div class="abs" style="left:875px;top:589px;width:1px;height:17px;background:#d0d0d0"></div>

<svg class="abs" style="left:0;top:0;pointer-events:none" width="1042" height="608" viewBox="0 0 1042 608">
<g font-family="Liberation Sans, sans-serif">
<text x="31" y="20" font-size="12" textLength="537" lengthAdjust="spacingAndGlyphs">C:\SimInTech64\Demo\Электроприводы\Асинхронный привод\Положение АД\Управление АД.prt</text>
<text x="8.3" y="45" font-size="12" textLength="19.5" lengthAdjust="spacingAndGlyphs">Вид</text>
<text x="42.5" y="45" font-size="12" textLength="51.2" lengthAdjust="spacingAndGlyphs">Масштаб</text>
<text x="108" y="45" font-size="12" fill="#7a7272" textLength="38" lengthAdjust="spacingAndGlyphs">Режим:</text>
<text x="155.3" y="45" font-size="12" fill="#7a7272" textLength="89" lengthAdjust="spacingAndGlyphs">Редактирование</text>
<text x="108" y="67.6" font-size="12" textLength="60.5" lengthAdjust="spacingAndGlyphs">Автоматика</text>
<text x="3" y="602" font-size="12.4" textLength="362" lengthAdjust="spacingAndGlyphs">X:1024.0  Y:80.0 Время: 0 Скорость=0 Макс.скорость=0 Цикл,мс=0</text>
<text x="456" y="602" font-size="12.4" textLength="81" lengthAdjust="spacingAndGlyphs">Выделено 0/86</text>
<text x="616" y="602" font-size="12.4" textLength="95.5" lengthAdjust="spacingAndGlyphs">Масштаб:100.0 %</text>
<text x="719" y="602" font-size="12.4" fill="#108010" textLength="55.5" lengthAdjust="spacingAndGlyphs">Сетка вкл.</text>
<text x="789.5" y="602" font-size="12.4" fill="#108010" textLength="76.5" lengthAdjust="spacingAndGlyphs">Привязка вкл.</text>
</g>
</svg>
<svg class="abs" style="left:1028px;top:594px" width="14" height="14" viewBox="1028 594 14 14"><g fill="#a6a6a6">
<rect x="1037" y="597" width="2" height="2"/><rect x="1034" y="600" width="2" height="2"/><rect x="1037" y="600" width="2" height="2"/>
<rect x="1031" y="603" width="2" height="2"/><rect x="1034" y="603" width="2" height="2"/><rect x="1037" y="603" width="2" height="2"/></g></svg>
<!-- window border -->
<div class="abs" style="left:0;top:0;width:1042px;height:608px;border:1px solid #a6a6a6;border-radius:8px;pointer-events:none"></div>
</body></html>
